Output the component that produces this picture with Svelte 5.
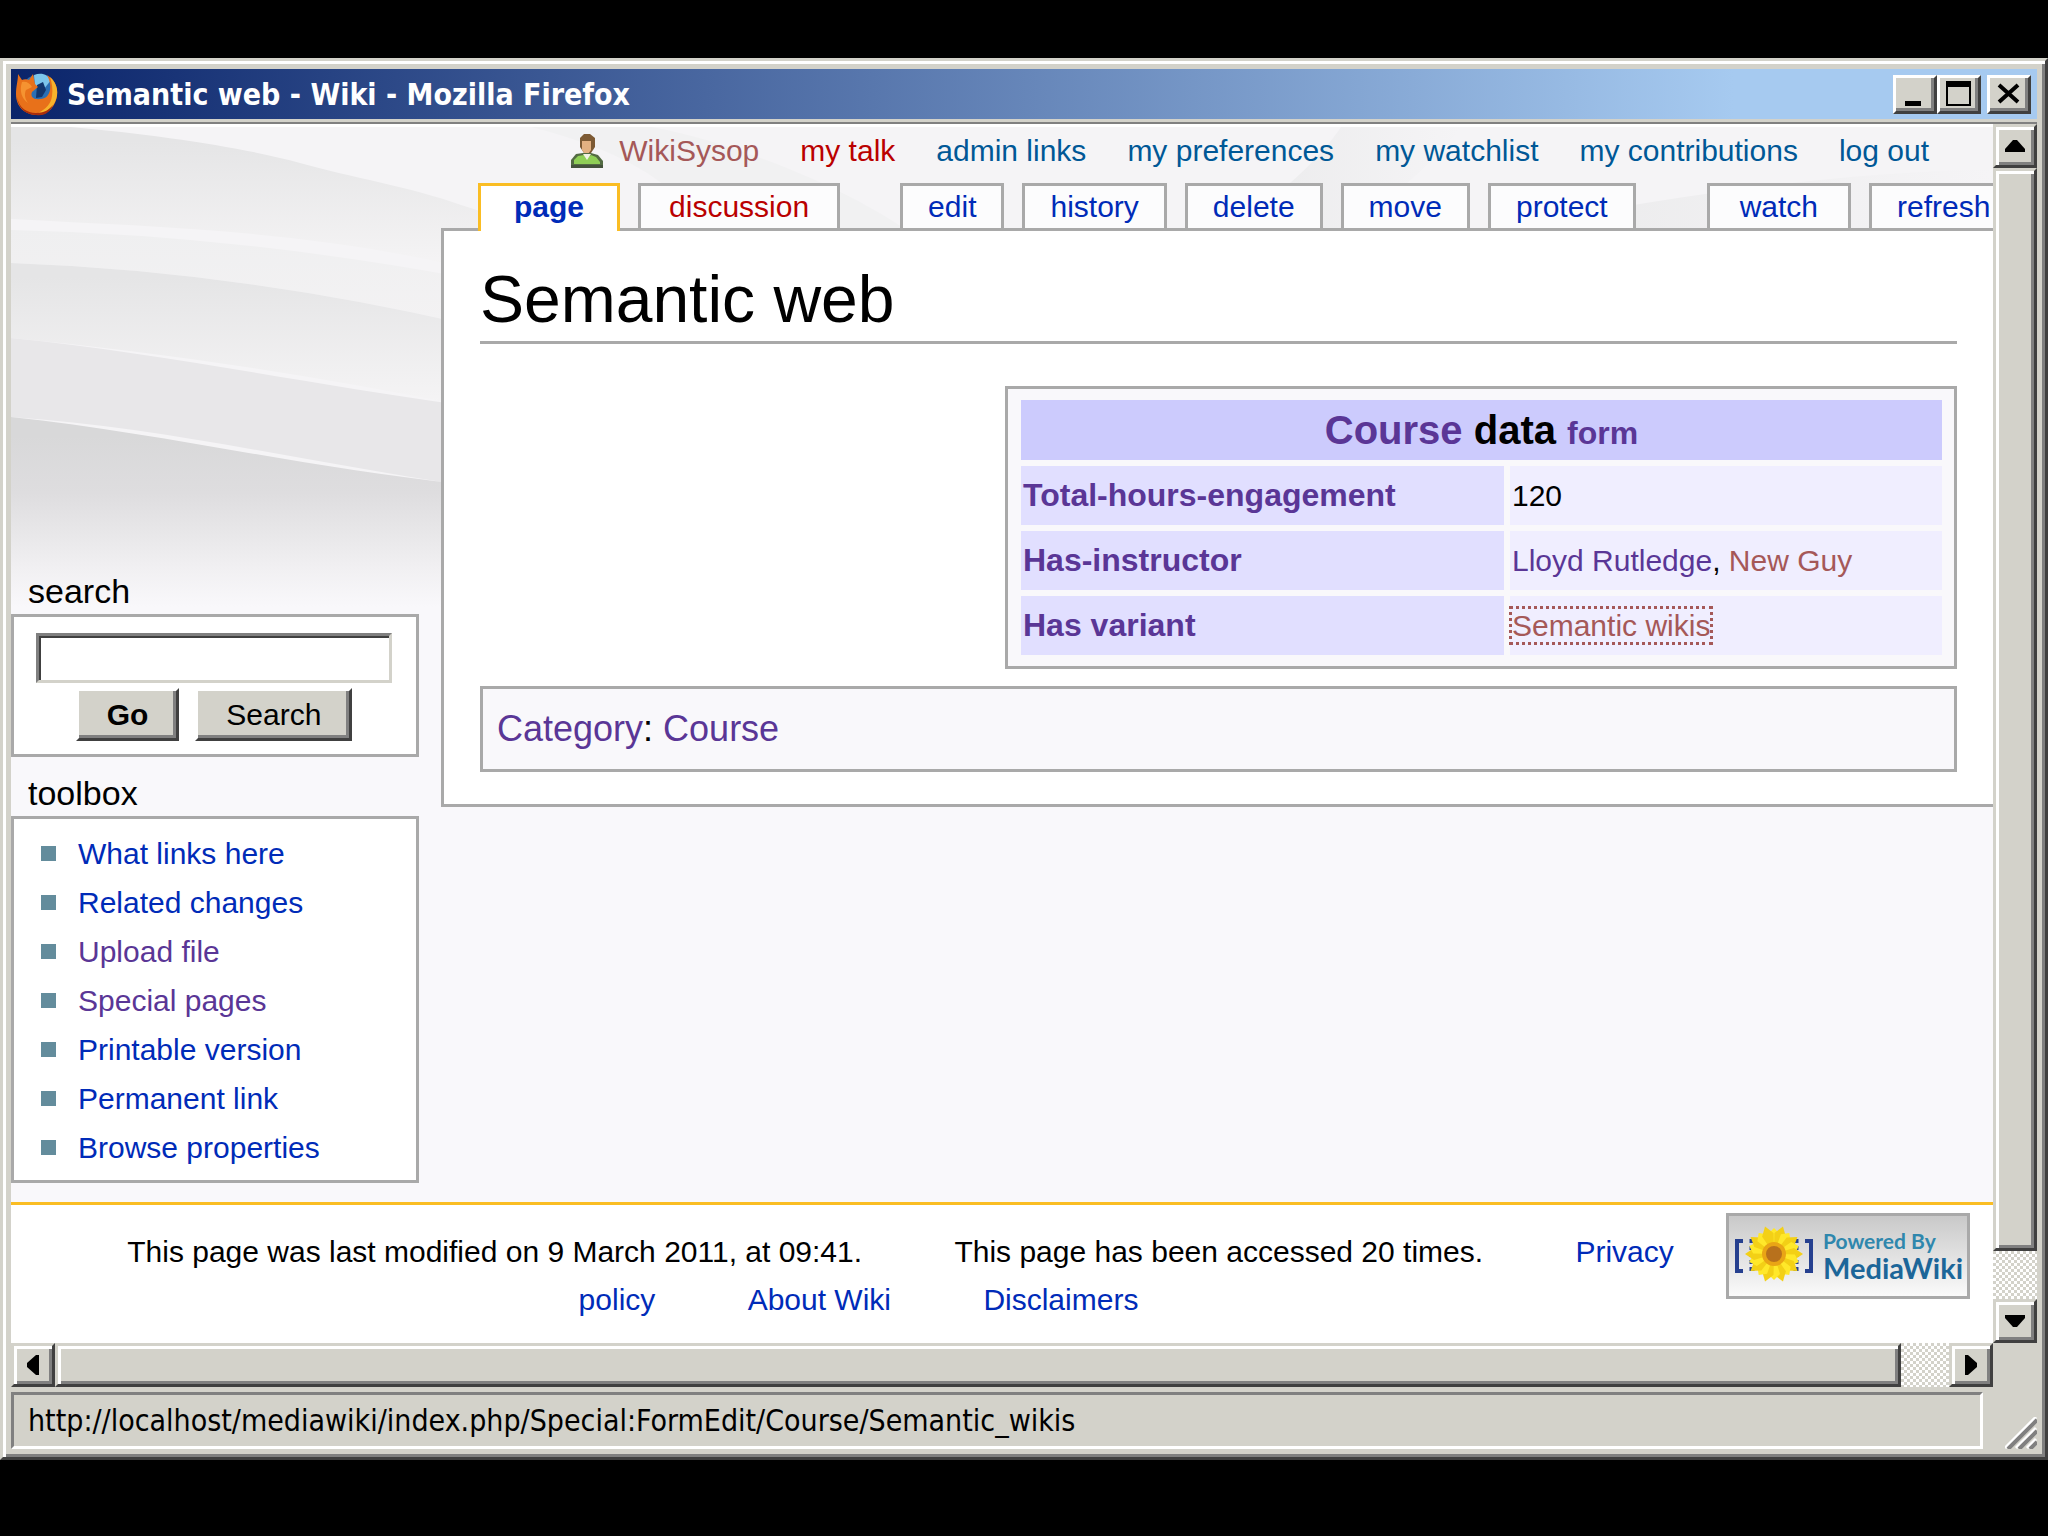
<script>
  const personal = [
    { label: 'WikiSysop', kind: 'new-visited' },
    { label: 'my talk', kind: 'new' },
    { label: 'admin links' },
    { label: 'my preferences' },
    { label: 'my watchlist' },
    { label: 'my contributions' },
    { label: 'log out' }
  ];

  const tabs = [
    { label: 'page', cls: 'selected' },
    { label: 'discussion', cls: 'missing' },
    { label: 'edit', cls: 'spaced' },
    { label: 'history', cls: '' },
    { label: 'delete', cls: '' },
    { label: 'move', cls: '' },
    { label: 'protect', cls: '' },
    { label: 'watch', cls: 'spaced wide' },
    { label: 'refresh', cls: '' }
  ];

  const toolbox = [
    { label: 'What links here' },
    { label: 'Related changes' },
    { label: 'Upload file', visited: true },
    { label: 'Special pages', visited: true },
    { label: 'Printable version' },
    { label: 'Permanent link' },
    { label: 'Browse properties' }
  ];

  // petals of the sunflower in the badge
  const petals = Array.from({ length: 20 }, (_, i) => i * 18);

  let query = '';
</script>

<div class="window">
  <header class="titlebar">
    <svg class="firefox" viewBox="0 0 44 44" aria-hidden="true">
      <circle cx="23" cy="20" r="17" fill="#2a6fb5" />
      <path d="M19 3c8-3 14 0 17 5l-7 9-9-3z" fill="#7cc6ec" />
      <path d="M22 13l6-3 3 8-4 7-6 1z" fill="#12366e" />
      <path d="M3 2l4 6c2-1 5-1 7 0l4-6 2 10 3 3-6 5c-2 5 2 8 8 7 6 0 9-4 10-9 1-6-1-11-3-15 7 4 11 11 10 20-1 11-9 20-19 20C10 43 1 35 1 22 1 14 3 9 3 2z" fill="#e8711a" />
      <path d="M35 5c8 7 9 17 5 25-4 8-11 11-17 11 8-4 13-9 14-17 1-7 0-13-2-19z" fill="#f6b32c" />
      <path d="M2 25c2 11 10 16 19 16 8 0 13-3 17-8-4 9-10 11-17 10-10 0-18-7-19-18z" fill="#a92d0c" />
      <path d="M7 10c4-1 8 1 10 5l-6 3c-2 4-1 9 2 13-6-4-9-12-6-21z" fill="#f59331" />
    </svg>
    <div class="caption">Semantic web - Wiki - Mozilla Firefox</div>
    <div class="controls">
      <button type="button" aria-label="Minimize">
        <svg viewBox="0 0 38 33"><path d="M9 23h16v5H9z" /></svg>
      </button>
      <button type="button" aria-label="Maximize">
        <svg viewBox="0 0 38 33"><path d="M6 3h25v25H6zM8 9v17h21V9z" fill-rule="evenodd" /></svg>
      </button>
      <button type="button" class="close" aria-label="Close">
        <svg viewBox="0 0 38 33"><path d="M9 7l19 17M28 7L9 24" fill="none" stroke="#000" stroke-width="4" /></svg>
      </button>
    </div>
  </header>

  <div class="browser">
    <div class="page">
      <svg class="backdrop" viewBox="0 0 1982 480" preserveAspectRatio="none" aria-hidden="true">
        <defs>
          <linearGradient id="fold" x1="0" y1="0" x2="0" y2="1">
            <stop offset="0.1" stop-color="#e5e5e6" />
            <stop offset="1" stop-color="#f5f4f5" />
          </linearGradient>
          <linearGradient id="faint" x1="0" y1="0" x2="0" y2="1">
            <stop offset="0" stop-color="#efeff0" />
            <stop offset="1" stop-color="#f3f2f3" />
          </linearGradient>
          <linearGradient id="deep" x1="0" y1="0" x2="0" y2="1">
            <stop offset="0.1" stop-color="#d8d8d9" />
            <stop offset="0.4" stop-color="#dedddf" />
            <stop offset="0.8" stop-color="#f1f0f2" />
            <stop offset="1" stop-color="#f9f8fb" />
          </linearGradient>
          <linearGradient id="sheen" x1="0" y1="0" x2="1" y2="0">
            <stop offset="0" stop-color="#eaeaeb" />
            <stop offset="1" stop-color="#f5f4f6" />
          </linearGradient>
        </defs>
        <rect width="1982" height="480" fill="#f5f4f6" />
        <path d="M0 0H60C150 8 240 22 289 36S400 60 450 78C490 90 520 104 540 120L450 140C300 104 150 100 0 92z" fill="url(#fold)" />
        <path d="M0 103Q222 108 450 150V196Q222 144 0 136z" fill="url(#faint)" />
        <path d="M0 136Q222 144 450 196V278Q222 232 0 211z" fill="url(#fold)" />
        <path d="M0 211C150 226 290 256 450 278V358C290 334 150 300 0 290z" fill="#e8e7e9" />
        <path d="M0 290C150 306 290 340 450 357V480H0z" fill="url(#deep)" />
        <path d="M520 0C600 20 660 50 700 106H900C820 50 700 10 640 0z" fill="#f1f1f2" />
        <path d="M1210 106C1270 70 1310 30 1330 0H1450C1420 40 1370 80 1330 106z" fill="url(#sheen)" />
        <path d="M1480 106C1640 70 1820 46 1982 42V106z" fill="url(#sheen)" />
      </svg>

      <nav class="personal" aria-label="Personal tools">
        <svg class="user" viewBox="0 0 32 34" aria-hidden="true">
          <path d="M9 4l4-4h6l5 4v9l-4 6h-7l-4-6z" fill="#7d5a34" />
          <path d="M11 7h9v9l-3 4h-3l-3-4z" fill="#e3b182" />
          <path d="M0 34v-8l5-6 7-1h8l7 2 5 6v7z" fill="#536b43" />
          <path d="M3 30v-4l4-4 6-1 3 3 4-3 5 2 4 5v2z" fill="#8fcf56" />
          <path d="M12 20h8l-4 6z" fill="#f2f2e4" />
          <path d="M0 31h32v3H0z" fill="#44523c" />
        </svg>
        {#each personal as item}
          <a href="#top" class={item.kind}>{item.label}</a>
        {/each}
      </nav>

      <div class="columns">
        <aside>
          <section>
            <h2><label for="search-input">search</label></h2>
            <form class="box search" on:submit|preventDefault>
              <input id="search-input" type="text" bind:value={query} />
              <div class="buttons">
                <button type="submit" class="go">Go</button>
                <button type="submit">Search</button>
              </div>
            </form>
          </section>
          <section>
            <h2>toolbox</h2>
            <ul class="box toolbox">
              {#each toolbox as item}
                <li><a href="#top" class:visited={item.visited}>{item.label}</a></li>
              {/each}
            </ul>
          </section>
        </aside>

        <div class="main">
          <nav class="tabs" aria-label="Views">
            {#each tabs as tab}
              <a href="#top" class="tab {tab.cls}">{tab.label}</a>
            {/each}
          </nav>
          <main>
            <h1>Semantic web</h1>
            <table>
              <colgroup><col class="names" /><col /></colgroup>
              <thead>
                <tr>
                  <th colspan="2"><a href="#top">Course</a> data <a class="form" href="#top">form</a></th>
                </tr>
              </thead>
              <tbody>
                <tr>
                  <th scope="row"><a href="#top">Total-hours-engagement</a></th>
                  <td>120</td>
                </tr>
                <tr>
                  <th scope="row"><a href="#top">Has-instructor</a></th>
                  <td><a href="#top">Lloyd Rutledge</a>, <a class="new-visited" href="#top">New Guy</a></td>
                </tr>
                <tr>
                  <th scope="row"><a href="#top">Has variant</a></th>
                  <td><a class="new-visited focused" href="#top">Semantic wikis</a></td>
                </tr>
              </tbody>
            </table>
            <div class="category"><a href="#top">Category</a>: <a href="#top">Course</a></div>
          </main>
        </div>
      </div>

      <footer>
        <p>
          <span>This page was last modified on 9 March 2011, at 09:41.</span>
          <span>This page has been accessed 20 times.</span>
          <a href="#top">Privacy<br />policy</a>
          <a href="#top">About Wiki</a>
          <a href="#top">Disclaimers</a>
        </p>
        <a class="badge" href="#top" aria-label="Powered By MediaWiki">
          <svg viewBox="0 0 80 64" aria-hidden="true">
            <path d="M9 19H3v30h6M71 19h6v30h-6" fill="none" stroke="#26408f" stroke-width="4" />
            <path d="M18 17v34M62 17v34" fill="none" stroke="#26408f" stroke-width="5" stroke-dasharray="4 3" />
            {#each petals as angle}
              <path d="M40 32L34 12L40 {angle % 36 ? 3 : 6}L46 12z" fill={angle % 36 ? '#f3d016' : '#ffe82a'} transform="rotate({angle} 40 32)" />
            {/each}
            <circle cx="40" cy="32" r="12" fill="#e9a515" />
            <circle cx="40" cy="32" r="8" fill="#b8711c" />
          </svg>
          <span class="words"><small>Powered By</small><b>MediaWiki</b></span>
        </a>
      </footer>
    </div>

    <div class="scroll vertical">
      <button type="button" aria-label="Scroll up"><svg viewBox="0 0 20 12"><path d="M8 0h4l8 9v3H0V9z" /></svg></button>
      <div class="thumb"></div>
      <div class="track"></div>
      <button type="button" aria-label="Scroll down"><svg viewBox="0 0 20 12"><path d="M0 0h20v3l-8 9H8L0 3z" /></svg></button>
    </div>
    <div class="scroll horizontal">
      <button type="button" aria-label="Scroll left"><svg viewBox="0 0 12 20"><path d="M12 0v20H9L0 12V8L9 0z" /></svg></button>
      <div class="thumb"></div>
      <div class="track"></div>
      <button type="button" aria-label="Scroll right"><svg viewBox="0 0 12 20"><path d="M0 0h3l9 8v4l-9 8H0z" /></svg></button>
    </div>
  </div>

  <div class="statusbar">
    <div class="status">http://localhost/mediawiki/index.php/Special:FormEdit/Course/Semantic_wikis</div>
    <svg class="grip" viewBox="0 0 32 32" aria-hidden="true">
      <path d="M0 31L31 0M11 31L31 11M22 31L31 22" stroke="#fff" stroke-width="3" />
      <path d="M3 32L32 3M14 32L32 14M25 32L32 25" stroke="#808080" stroke-width="4" />
    </svg>
  </div>
</div>

<style>
  :global(body) {
    background: #000;
    font-family: "Liberation Sans", Arial, sans-serif;
    font-size: 30px;
  }

  .window {
    box-sizing: border-box;
    display: flex;
    flex-direction: column;
    min-height: calc(100vh - 134px);
    margin: 58px 0 76px;
    padding: 8px;
    background: #d3d2ca;
    border: 3px solid;
    border-color: #d3d2ca #404040 #404040 #d3d2ca;
    box-shadow: inset 3px 3px #fff, inset -3px -3px #808080;
  }

  a {
    color: #002bb8;
    text-decoration: none;
  }

  button {
    box-sizing: border-box;
    padding: 0;
    color: #000;
    font: inherit;
    background: #d3d2ca;
    border: 3px solid;
    border-color: #fff #404040 #404040 #fff;
    box-shadow: inset -3px -3px #808080;
  }

  .titlebar {
    display: flex;
    align-items: center;
    height: 50px;
    padding: 0 6px 0 4px;
    background: linear-gradient(to right, #0a246a, #a6caf0 85%);
  }

  .firefox {
    width: 44px;
    height: 44px;
  }

  .caption {
    flex: 1;
    margin-left: 8px;
    color: #fff;
    font: bold 30px "DejaVu Sans Condensed", "DejaVu Sans", sans-serif;
  }

  .controls {
    display: flex;
  }

  .controls button {
    width: 44px;
    height: 39px;
  }

  .controls .close {
    margin-left: 6px;
  }

  .controls svg {
    display: block;
    width: 38px;
    height: 33px;
  }

  .browser {
    flex: 1;
    display: grid;
    grid-template-columns: 1fr 44px;
    grid-template-rows: 1fr 44px;
    margin-top: 3px;
    border-top: 2px solid #808080;
  }

  .page {
    position: relative;
    display: flex;
    flex-direction: column;
    min-width: 0;
    overflow: hidden;
    background: #f9f8fb;
    border-top: 3px solid #fff;
  }

  .backdrop {
    position: absolute;
    top: 0;
    left: 0;
    width: 100%;
    height: 480px;
  }

  .personal {
    box-sizing: border-box;
    position: relative;
    display: flex;
    justify-content: flex-end;
    align-items: center;
    gap: 41px;
    height: 56px;
    padding: 0 64px 8px 0;
    white-space: nowrap;
  }

  .personal a {
    color: #005896;
  }

  .user {
    width: 32px;
    height: 34px;
    margin-right: -25px;
  }

  .personal .new {
    color: #ba0000;
  }

  .personal .new-visited,
  td .new-visited {
    color: #a55858;
  }

  .columns {
    position: relative;
    flex: 1;
    display: flex;
    gap: 22px;
  }

  aside {
    flex: none;
    width: 408px;
    padding: 386px 0 5px;
  }

  section {
    margin-bottom: 14px;
  }

  h2 {
    margin: 0 0 0 17px;
    font-size: 34px;
    font-weight: normal;
    line-height: 45px;
  }

  .box {
    margin: 0;
    background: #fff;
    border: 3px solid #a9a9a9;
  }

  .search {
    padding: 16px 24px 13px 22px;
  }

  .search input {
    box-sizing: border-box;
    display: block;
    width: 100%;
    height: 50px;
    padding: 0 8px;
    font: inherit;
    border: 3px solid;
    border-color: #808080 #d3d2ca #d3d2ca #808080;
    box-shadow: inset 2px 2px #404040;
  }

  .buttons {
    display: flex;
    justify-content: center;
    gap: 16px;
    margin-top: 5px;
  }

  .buttons button {
    height: 53px;
    padding: 0 28px;
  }

  .buttons .go {
    font-weight: bold;
  }

  .toolbox {
    padding: 10px 0 8px;
    list-style: none;
  }

  .toolbox li {
    display: flex;
    align-items: center;
    gap: 22px;
    padding-left: 27px;
    line-height: 49px;
  }

  .toolbox li::before {
    content: "";
    width: 15px;
    height: 15px;
    background: #638c9c;
  }

  .visited,
  main a {
    color: #5a3696;
  }

  .main {
    flex: 1;
    min-width: 0;
  }

  .tabs {
    position: relative;
    display: flex;
    gap: 18px;
    padding-left: 37px;
    white-space: nowrap;
  }

  .tab {
    padding: 0 25px;
    line-height: 42px;
    background: #fcfcfd;
    border: 3px solid #a9a9a9;
    border-bottom: 0;
  }

  .tab.selected {
    margin-bottom: -3px;
    padding: 0 33px 3px;
    background: #fff;
    border-color: #fabd23;
    font-weight: bold;
  }

  .tab.missing {
    padding: 0 28px;
    color: #ba0000;
  }

  .tab.spaced {
    margin-left: 42px;
  }

  .tab.wide {
    margin-left: 53px;
    padding: 0 30px;
  }

  main {
    padding: 32px 36px 32px;
    background: #fff;
    border: 3px solid #a9a9a9;
    border-right: 0;
  }

  main h1 {
    margin: 0 0 42px;
    padding-bottom: 6px;
    font-size: 66px;
    font-weight: normal;
    line-height: 72px;
    border-bottom: 3px solid #a9a9a9;
  }

  table {
    box-sizing: border-box;
    width: 952px;
    max-width: 100%;
    margin: 0 0 17px auto;
    padding: 5px 6px 5px 7px;
    background: #f9f8fb;
    border: 3px solid #a9a9a9;
    border-spacing: 6px;
  }

  .names {
    width: 483px;
  }

  th,
  td {
    height: 59px;
    padding: 0 2px;
    text-align: left;
    background: #f0eeff;
  }

  th {
    font-size: 32px;
    background: #e1dfff;
  }

  thead th {
    height: 60px;
    font-size: 40px;
    text-align: center;
    background: #cccbfd;
  }

  .form {
    font-size: 32px;
  }

  .focused {
    outline: 3px dotted #a55858;
  }

  .category {
    padding: 0 14px;
    font-size: 36px;
    line-height: 80px;
    background: #f9f8fb;
    border: 3px solid #a9a9a9;
  }

  footer {
    position: relative;
    display: flex;
    align-items: flex-start;
    justify-content: space-between;
    min-height: 138px;
    padding: 0 23px 0 22px;
    background: #fff;
    border-top: 3px solid #fabd23;
  }

  footer p {
    flex: 1;
    margin: 23px 0 0;
    line-height: 48px;
    text-align: center;
  }

  footer p > * {
    margin: 0 42px;
  }

  .badge {
    box-sizing: border-box;
    display: flex;
    align-items: center;
    gap: 9px;
    width: 244px;
    height: 86px;
    margin-top: 8px;
    padding: 0 5px 4px;
    color: #1c6699;
    background: linear-gradient(#c9c9c9, #fafafa);
    border: 3px solid #a9a9a9;
  }

  .badge svg {
    flex: none;
    width: 80px;
    height: 64px;
  }

  .words {
    display: flex;
    flex-direction: column;
    font-family: Lato, sans-serif;
    line-height: 27px;
  }

  .words small {
    color: #2f87ad;
    font-size: 21px;
    font-weight: bold;
  }

  .words b {
    font-size: 29px;
  }

  .scroll {
    display: flex;
  }

  .vertical {
    flex-direction: column;
  }

  .scroll button {
    flex: none;
    display: grid;
    place-items: center;
    width: 44px;
    height: 44px;
  }

  .scroll svg {
    width: 20px;
    height: 12px;
  }

  .horizontal svg {
    width: 12px;
    height: 20px;
  }

  .thumb {
    flex: 1;
    background: #d3d2ca;
    border: 3px solid;
  }

  .scroll button,
  .thumb {
    border-color: #d3d2ca #404040 #404040 #d3d2ca;
    box-shadow: inset 3px 3px #fff, inset -3px -3px #808080;
  }

  .track {
    flex: 0 0 48px;
    background: repeating-conic-gradient(#fff 0 25%, #d3d2ca 0 50%) 0 0 / 6px 6px;
  }

  .statusbar {
    display: flex;
    align-items: flex-end;
    justify-content: space-between;
    margin-top: 5px;
  }

  .status {
    flex: 1;
    margin-right: 22px;
    padding: 0 14px;
    font: 30px "DejaVu Sans Condensed", "DejaVu Sans", sans-serif;
    line-height: 51px;
    border: 3px solid;
    border-color: #808080 #fff #fff #808080;
  }

  .grip {
    width: 32px;
    height: 32px;
  }
</style>
